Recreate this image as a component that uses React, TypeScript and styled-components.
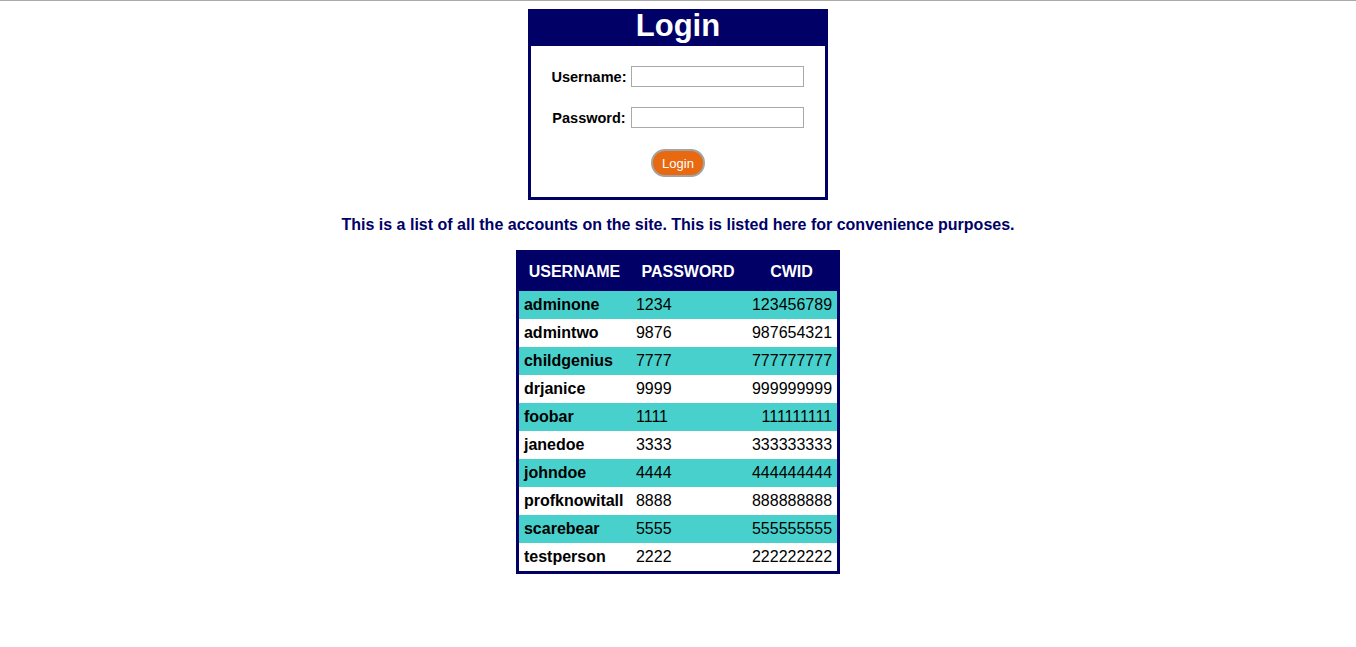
import React from "react";
import styled, { createGlobalStyle } from "styled-components";

const Global = createGlobalStyle`
  html, body { margin: 0; padding: 0; background: #ffffff; }
  body { font-family: "Liberation Sans", Arial, sans-serif; }
`;

const NAVY = "#000066";

const TopRule = styled.div`
  height: 1px;
  background: #aaaaaa;
`;

const Page = styled.main`
  display: flex;
  flex-direction: column;
  align-items: center;
  padding-top: 8px;
`;

const LoginBox = styled.section`
  width: 294px;
  border: 3px solid ${NAVY};
  background: #ffffff;
`;

const LoginHeader = styled.h1`
  margin: 0;
  height: 27px;
  padding-bottom: 7px;
  line-height: 27px;
  background: ${NAVY};
  color: #ffffff;
  font-size: 31px;
  font-weight: bold;
  text-align: center;
`;

const Form = styled.form`
  display: flex;
  flex-direction: column;
  align-items: center;
  padding: 20px 0 20px;
`;

const Field = styled.div<{ $gapAfter: number }>`
  display: flex;
  align-items: center;
  gap: 5px;
  height: 21px;
  margin-bottom: ${(p) => p.$gapAfter}px;
`;

const Label = styled.label`
  font-size: 14.5px;
  font-weight: bold;
  color: #000000;
`;

const Input = styled.input`
  box-sizing: border-box;
  width: 173px;
  height: 21px;
  margin: 0;
  border: 1px solid #a9a9a9;
  padding: 1px 2px;
  font-family: "Liberation Sans", Arial, sans-serif;
  font-size: 13px;
`;

const Button = styled.button`
  box-sizing: border-box;
  width: 54px;
  height: 28px;
  border: 2px solid #a3a3a3;
  border-radius: 14px;
  background: #e8690f;
  color: #ffffff;
  font-family: "Liberation Sans", Arial, sans-serif;
  font-size: 13px;
  padding: 0;
  cursor: pointer;
`;

const Note = styled.p`
  margin: 16px 0 16px;
  line-height: 18px;
  font-size: 16px;
  font-weight: bold;
  color: ${NAVY};
  text-align: center;
`;

const Table = styled.table`
  border: 3px solid ${NAVY};
  border-collapse: separate;
  border-spacing: 0;
  font-size: 16px;
  line-height: 18px;
`;

const Th = styled.th<{ $w: number }>`
  width: ${(p) => p.$w}px;
  box-sizing: border-box;
  padding: 10px 0;
  background: ${NAVY};
  color: #ffffff;
  font-weight: bold;
  text-align: center;
  text-transform: uppercase;
`;

const Row = styled.tr<{ $alt: boolean }>`
  background: ${(p) => (p.$alt ? "#48d1cc" : "#ffffff")};
`;

const Td = styled.td<{ $align?: "left" | "right"; $bold?: boolean }>`
  padding: 5px 5px 5px 6px;
  color: #000000;
  text-align: ${(p) => p.$align ?? "left"};
  font-weight: ${(p) => (p.$bold ? "bold" : "normal")};
  white-space: nowrap;
`;

const UserTd = styled(Td)`
  padding-left: 5px;
`;

const accounts = [
  ["adminone", "1234", "123456789"],
  ["admintwo", "9876", "987654321"],
  ["childgenius", "7777", "777777777"],
  ["drjanice", "9999", "999999999"],
  ["foobar", "1111", "111111111"],
  ["janedoe", "3333", "333333333"],
  ["johndoe", "4444", "444444444"],
  ["profknowitall", "8888", "888888888"],
  ["scarebear", "5555", "555555555"],
  ["testperson", "2222", "222222222"],
];

export default function App() {
  return (
    <>
      <Global />
      <TopRule />
      <Page>
        <LoginBox>
          <LoginHeader>Login</LoginHeader>
          <Form onSubmit={(e) => e.preventDefault()}>
            <Field $gapAfter={20}>
              <Label htmlFor="u">Username:</Label>
              <Input id="u" type="text" />
            </Field>
            <Field $gapAfter={21}>
              <Label htmlFor="p">Password:</Label>
              <Input id="p" type="password" />
            </Field>
            <Button type="submit">Login</Button>
          </Form>
        </LoginBox>
        <Note>
          This is a list of all the accounts on the site. This is listed here for convenience purposes.
        </Note>
        <Table>
          <thead>
            <tr>
              <Th $w={111}>Username</Th>
              <Th $w={116}>Password</Th>
              <Th $w={90}>CWID</Th>
            </tr>
          </thead>
          <tbody>
            {accounts.map(([u, p, c], i) => (
              <Row key={u} $alt={i % 2 === 0}>
                <UserTd $bold>{u}</UserTd>
                <Td>{p}</Td>
                <Td $align="right">{c}</Td>
              </Row>
            ))}
          </tbody>
        </Table>
      </Page>
    </>
  );
}
